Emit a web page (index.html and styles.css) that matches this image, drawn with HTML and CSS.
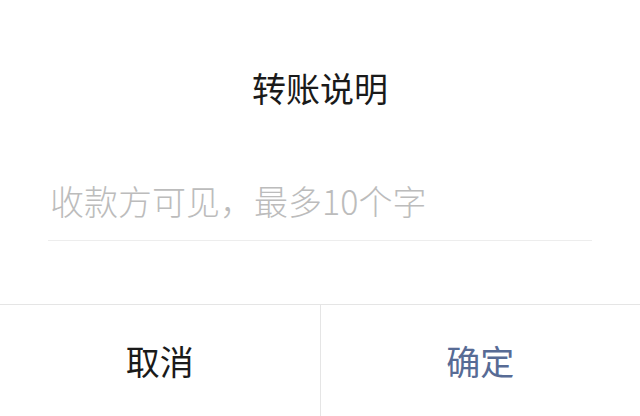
FILE: index.html
```html
<!DOCTYPE html>
<html lang="zh-CN">
<head>
<meta charset="utf-8">
<link rel="stylesheet" href="styles.css">
</head>
<body>
<div class="dialog">
  <div class="title">转账说明</div>
  <div class="field">
    <input class="input" type="text" placeholder="收款方可见，最多10个字">
  </div>
  <div class="actions">
    <div class="btn cancel">取消</div>
    <div class="btn confirm">确定</div>
  </div>
</div>
</body>
</html>
```
FILE: styles.css
```css
html, body {
  margin: 0;
  padding: 0;
  background: #fff;
}
.dialog {
  width: 640px;
  height: 416px;
  display: flex;
  flex-direction: column;
  font-family: "Noto Sans CJK SC", "Noto Sans", sans-serif;
  overflow: hidden;
}
.title {
  margin-top: 64px;
  line-height: 48px;
  height: 48px;
  font-size: 34px;
  color: #1a1a1a;
  text-align: center;
}
.field {
  margin: 65px 48px 0;
  padding-bottom: 15px;
  border-bottom: 1px solid #ededed;
}
.input {
  display: block;
  width: 100%;
  box-sizing: border-box;
  border: 0;
  outline: none;
  padding: 0 0 0 2px;
  margin: 0;
  height: 48px;
  line-height: 48px;
  font-family: inherit;
  font-size: 34px;
  font-weight: 300;
  color: #1a1a1a;
  background: transparent;
}
.input::placeholder {
  color: #bcbcbc;
}
.actions {
  margin-top: auto;
  height: 112px;
  box-sizing: border-box;
  border-top: 1px solid #e5e5e5;
  display: flex;
}
.btn {
  flex: 1;
  text-align: center;
  line-height: 111px;
  font-size: 34px;
}
.cancel {
  color: #1a1a1a;
  border-right: 1px solid #e5e5e5;
}
.confirm {
  color: #576b95;
}
```
